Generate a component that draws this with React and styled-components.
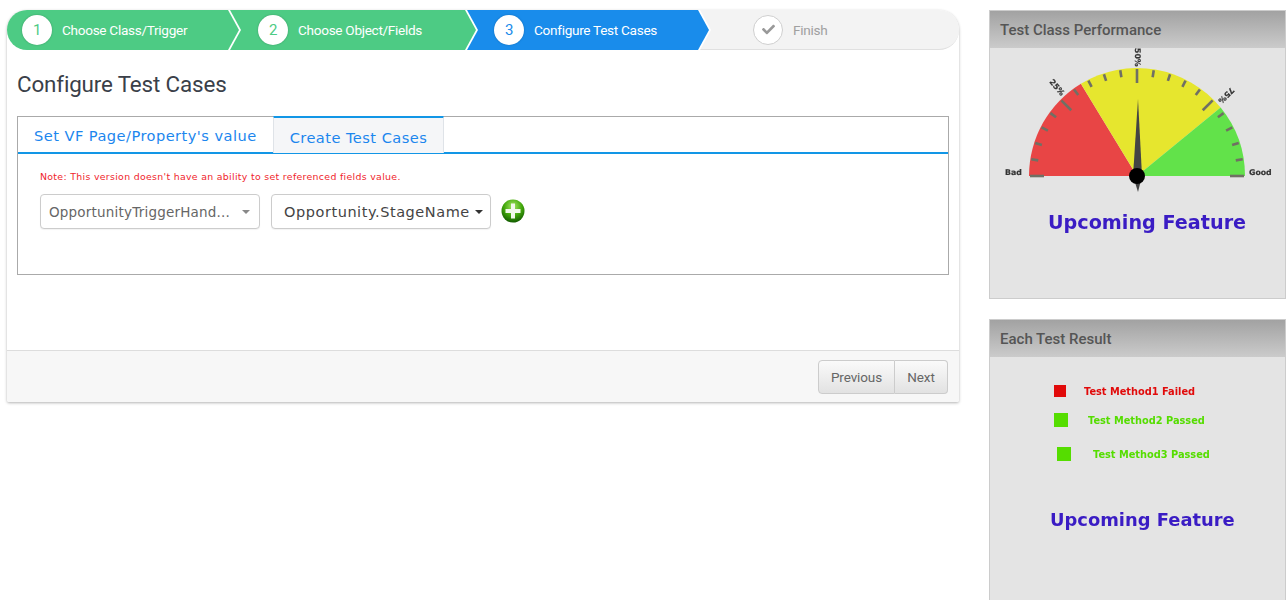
import React from 'react';
import styled, { createGlobalStyle } from 'styled-components';
import { FaCheck } from 'react-icons/fa';

const Global = createGlobalStyle`
  html, body { margin: 0; padding: 0; background: #fff; }
  body { font-family: Roboto, "Liberation Sans", sans-serif; height: 604px; overflow: hidden; }
  * { box-sizing: border-box; }
`;

const Page = styled.div`
  display: flex;
  align-items: flex-start;
  padding: 10px 0 0 7px;
  height: 604px;
  overflow: hidden;
`;

const Card = styled.main`
  flex: 0 0 952px;
  height: 392px;
  display: flex;
  flex-direction: column;
  background: #fff;
  border-radius: 20px 20px 2px 2px;
  box-shadow: 0 1px 3px rgba(0, 0, 0, 0.3);
`;

const Stepper = styled.div`
  display: flex;
  height: 40px;
  flex: none;
`;

const colours = { done: '#4dcb84', active: '#198ceb', todo: '#f3f3f3' };

const Step = styled.div`
  position: relative;
  z-index: ${(p) => p.$z};
  flex: 0 0 ${(p) => p.$w}px;
  display: flex;
  align-items: center;
  padding-left: ${(p) => p.$pad}px;
  background: ${(p) => colours[p.$state]};
  border-radius: ${(p) => p.$radius || '0'};
  border-bottom: ${(p) => (p.$state === 'todo' ? '1px solid #e0e0e0' : 'none')};
  color: ${(p) => (p.$state === 'todo' ? '#a0a0a0' : '#fff')};
  font-size: 13.6px;
  letter-spacing: -0.3px;
  ${(p) => p.$arrow && `
    &::before, &::after {
      content: '';
      position: absolute;
      top: 0;
      left: 100%;
      height: 40px;
    }
    &::before {
      width: 13px;
      background: #fff;
      clip-path: polygon(0 0, 2px 0, 13px 20px, 2px 40px, 0 40px);
    }
    &::after {
      width: 11px;
      background: ${colours[p.$state]};
      clip-path: polygon(0 0, 11px 20px, 0 40px);
    }
  `}
`;

const StepCircle = styled.span`
  flex: none;
  width: 30px;
  height: 30px;
  margin-right: 10px;
  border-radius: 50%;
  display: flex;
  align-items: center;
  justify-content: center;
  background: #fff;
  font-size: 15px;
  color: ${(p) => p.$color};
  border: ${(p) => (p.$ring ? '1px solid #cfcfcf' : 'none')};
  box-shadow: ${(p) => (p.$ring ? 'none' : '0 0 2px rgba(0,0,0,.25)')};
`;

const Title = styled.h1`
  margin: 21px 0 0 10px;
  font-size: 22.4px;
  line-height: 26px;
  font-weight: 400;
  color: #3a4049;
  letter-spacing: -0.15px;
`;

const TabBox = styled.section`
  margin: 19px 10px 0;
  height: 159px;
  border: 1px solid #aaa;
  flex: none;
`;

const TabBar = styled.div`
  display: flex;
  height: 37px;
  border-bottom: 2px solid #1296e6;
  font-family: "DejaVu Sans", Verdana, sans-serif;
  font-size: 14.6px;
  letter-spacing: 0.46px;
  color: #1c86ee;
`;

const Tab = styled.div`
  display: flex;
  align-items: center;
  height: ${(p) => (p.$active ? '37px' : '35px')};
  padding: ${(p) => (p.$active ? '3px 16px 0' : '2px 16px 0')};
  background: ${(p) => (p.$active ? '#f5f6f8' : 'transparent')};
  border-top: ${(p) => (p.$active ? '2px solid #1296e6' : 'none')};
  border-left: ${(p) => (p.$active ? '1px solid #dfe3e8' : 'none')};
  border-right: ${(p) => (p.$active ? '1px solid #dfe3e8' : 'none')};
  margin-top: ${(p) => (p.$active ? '-1px' : '0')};
  position: relative;
  white-space: nowrap;
`;

const TabBody = styled.div`
  padding: 17px 22px 0;
`;

const Note = styled.p`
  margin: 0;
  font-family: "DejaVu Sans", Verdana, sans-serif;
  font-size: 9.4px;
  letter-spacing: 0.31px;
  line-height: 12px;
  color: #f01e2c;
`;

const Fields = styled.div`
  display: flex;
  align-items: center;
  margin-top: 11px;
`;

const Select = styled.div`
  position: relative;
  flex: 0 0 220px;
  height: 35px;
  margin-right: 11px;
  display: flex;
  align-items: center;
  padding-left: ${(p) => p.$pad}px;
  border: 1px solid #ccc;
  border-radius: 4px;
  background: #fff;
  font-family: "DejaVu Sans", Verdana, sans-serif;
  font-size: ${(p) => p.$size}px;
  letter-spacing: ${(p) => p.$spacing}px;
  color: ${(p) => p.$color};
  white-space: nowrap;
  box-shadow: 0 1px 1px rgba(0, 0, 0, 0.05);
  &::after {
    content: '';
    position: absolute;
    right: ${(p) => p.$caretRight}px;
    top: 15px;
    border-left: 4px solid transparent;
    border-right: 4px solid transparent;
    border-top: 4px solid ${(p) => p.$caret};
  }
`;

const PlusIcon = styled.svg`
  flex: none;
  width: 24px;
  height: 24px;
  margin: -2px 0 0 -1px;
`;

const Footer = styled.footer`
  margin-top: auto;
  height: 52px;
  display: flex;
  align-items: center;
  justify-content: flex-end;
  padding: 0 11px 0 0;
  background: #f7f7f7;
  border-top: 1px solid #ddd;
  border-radius: 0 0 2px 2px;
`;

const BtnGroup = styled.div`
  display: flex;
`;

const Btn = styled.button`
  height: 34px;
  width: ${(p) => p.$w}px;
  padding: 0;
  border: 1px solid #ccc;
  border-left-width: ${(p) => (p.$first ? '1px' : '0')};
  border-radius: ${(p) => (p.$first ? '4px 0 0 4px' : '0 4px 4px 0')};
  background: linear-gradient(#fafafa, #e2e2e2);
  font-family: Roboto, sans-serif;
  font-size: 13.5px;
  letter-spacing: -0.1px;
  color: #666;
`;

const Side = styled.aside`
  flex: 0 0 297px;
  margin-left: 30px;
  display: flex;
  flex-direction: column;
  gap: 20px;
`;

const Panel = styled.section`
  height: ${(p) => p.$h}px;
  display: flex;
  flex-direction: column;
  background: #e4e4e4;
  border: 1px solid #ccc;
  border-bottom: ${(p) => (p.$open ? 'none' : '1px solid #ccc')};
`;

const PanelHead = styled.h2`
  flex: none;
  margin: 0;
  height: 37px;
  padding-left: 10px;
  display: flex;
  align-items: center;
  background: linear-gradient(#a2a2a2, #cbcbcb);
  color: #555;
  font-size: 15px;
  font-weight: 500;
`;

const PanelBody = styled.div`
  flex: 1;
  filter: blur(0.45px);
  overflow: hidden;
`;

const Gauge = styled.svg`
  display: block;
  width: 295px;
  height: 150px;
`;

const Upcoming = styled.div`
  font-family: "DejaVu Sans", Verdana, sans-serif;
  font-weight: 700;
  font-size: ${(p) => p.$size}px;
  line-height: 24px;
  color: #3a1cc4;
  margin-top: ${(p) => p.$top}px;
  margin-left: ${(p) => p.$left}px;
  white-space: nowrap;
`;

const Result = styled.div`
  display: flex;
  align-items: center;
  height: ${(p) => p.$square}px;
  margin-top: ${(p) => p.$top}px;
  margin-left: ${(p) => p.$left}px;
  color: ${(p) => p.$color};
  font-family: "DejaVu Sans", Verdana, sans-serif;
  font-size: 9.8px;
  font-weight: 700;
  white-space: nowrap;
`;

const Swatch = styled.span`
  flex: none;
  width: ${(p) => p.$square}px;
  height: ${(p) => p.$square}px;
  margin-right: ${(p) => p.$gap}px;
  background: ${(p) => p.$color};
`;

const CX = 1137;
const CY = 176;

const ticks = Array.from({ length: 21 }, (_, i) => {
  const a = (Math.PI * i) / 20;
  const major = i % 5 === 0;
  const r1 = major ? 93 : 100;
  const r2 = 107;
  return {
    x1: CX - Math.cos(a) * r1,
    y1: CY - Math.sin(a) * r1,
    x2: CX - Math.cos(a) * r2,
    y2: CY - Math.sin(a) * r2,
    key: i,
  };
});

function GaugeChart() {
  return (
    <Gauge viewBox="990 48 295 150">
      <path d={`M${CX} ${CY} L1029 ${CY} A108 108 0 0 1 1080.9 83.7 Z`} fill="#e84545" />
      <path d={`M${CX} ${CY} L1080.9 83.7 A108 108 0 0 1 1220.6 107.6 Z`} fill="#e6e62e" />
      <path d={`M${CX} ${CY} L1220.6 107.6 A108 108 0 0 1 1245 ${CY} Z`} fill="#62e24a" />
      {ticks.map((t) => (
        <line key={t.key} x1={t.x1} y1={t.y1} x2={t.x2} y2={t.y2} stroke="#707064" strokeWidth="2.6" />
      ))}
      <path d="M1138 99 L1142 176 L1138 192 L1133 176 Z" fill="#444" />
      <circle cx={CX} cy={CY} r="8" fill="#000" />
      <g fontFamily="DejaVu Sans, sans-serif" fontSize="7.8" fontWeight="700" fill="#333" stroke="#333" strokeWidth="0.2">
        <text x="1005" y="175">Bad</text>
        <text x="1249" y="175">Good</text>
        <text transform="translate(1049 82) rotate(50)">25%</text>
        <text transform="translate(1135 48) rotate(90)">50%</text>
        <text transform="translate(1231 87) rotate(135)">75%</text>
      </g>
    </Gauge>
  );
}

export default function App() {
  return (
    <>
      <Global />
      <Page>
        <Card>
          <Stepper>
            <Step $z={4} $w={221} $pad={15} $state="done" $arrow $radius="20px 0 0 20px">
              <StepCircle $color="#4dcb84">1</StepCircle>Choose Class/Trigger
            </Step>
            <Step $z={3} $w={237} $pad={30} $state="done" $arrow>
              <StepCircle $color="#4dcb84">2</StepCircle>Choose Object/Fields
            </Step>
            <Step $z={2} $w={233} $pad={29} $state="active" $arrow>
              <StepCircle $color="#198ceb">3</StepCircle>Configure Test Cases
            </Step>
            <Step $z={1} $w={261} $pad={55} $state="todo" $radius="0 20px 20px 0">
              <StepCircle $ring $color="#999"><FaCheck size={13} /></StepCircle>Finish
            </Step>
          </Stepper>
          <Title>Configure Test Cases</Title>
          <TabBox>
            <TabBar>
              <Tab>Set VF Page/Property's value</Tab>
              <Tab $active>Create Test Cases</Tab>
            </TabBar>
            <TabBody>
              <Note>Note: This version doesn't have an ability to set referenced fields value.</Note>
              <Fields>
                <Select $pad={8} $size={13.5} $spacing={0.2} $color="#666" $caret="#888" $caretRight={9}>OpportunityTriggerHand...</Select>
                <Select $pad={12} $size={14.5} $spacing={0.55} $color="#444" $caret="#333" $caretRight={7}>Opportunity.StageName</Select>
                <PlusIcon viewBox="0 0 24 24">
                  <defs>
                    <radialGradient id="plusBall" cx="50%" cy="30%" r="70%">
                      <stop offset="0" stopColor="#a8e866" />
                      <stop offset="0.55" stopColor="#43a80c" />
                      <stop offset="1" stopColor="#125c00" />
                    </radialGradient>
                  </defs>
                  <circle cx="12" cy="12" r="11.5" fill="url(#plusBall)" />
                  <path d="M10 4.5h4v5.5h5.5v4h-5.5v5.5h-4v-5.5h-5.5v-4h5.5z" fill="#f1f8ea" />
                </PlusIcon>
              </Fields>
            </TabBody>
          </TabBox>
          <Footer>
            <BtnGroup>
              <Btn $first $w={77}>Previous</Btn>
              <Btn $w={53}>Next</Btn>
            </BtnGroup>
          </Footer>
        </Card>
        <Side>
          <Panel $h={289}>
            <PanelHead>Test Class Performance</PanelHead>
            <PanelBody>
              <GaugeChart />
              <Upcoming $size={19.2} $top={13} $left={58}>Upcoming Feature</Upcoming>
            </PanelBody>
          </Panel>
          <Panel $h={281} $open>
            <PanelHead>Each Test Result</PanelHead>
            <PanelBody>
              <Result $square={12} $top={28} $left={64} $color="#e10a0a">
                <Swatch $square={12} $gap={18} $color="#e10a0a" />Test Method1 Failed
              </Result>
              <Result $square={14} $top={16} $left={64} $color="#55dd00">
                <Swatch $square={14} $gap={20} $color="#55dd00" />Test Method2 Passed
              </Result>
              <Result $square={14} $top={20} $left={67} $color="#55dd00">
                <Swatch $square={14} $gap={22} $color="#55dd00" />Test Method3 Passed
              </Result>
              <Upcoming $size={17.9} $top={47} $left={60}>Upcoming Feature</Upcoming>
            </PanelBody>
          </Panel>
        </Side>
      </Page>
    </>
  );
}
